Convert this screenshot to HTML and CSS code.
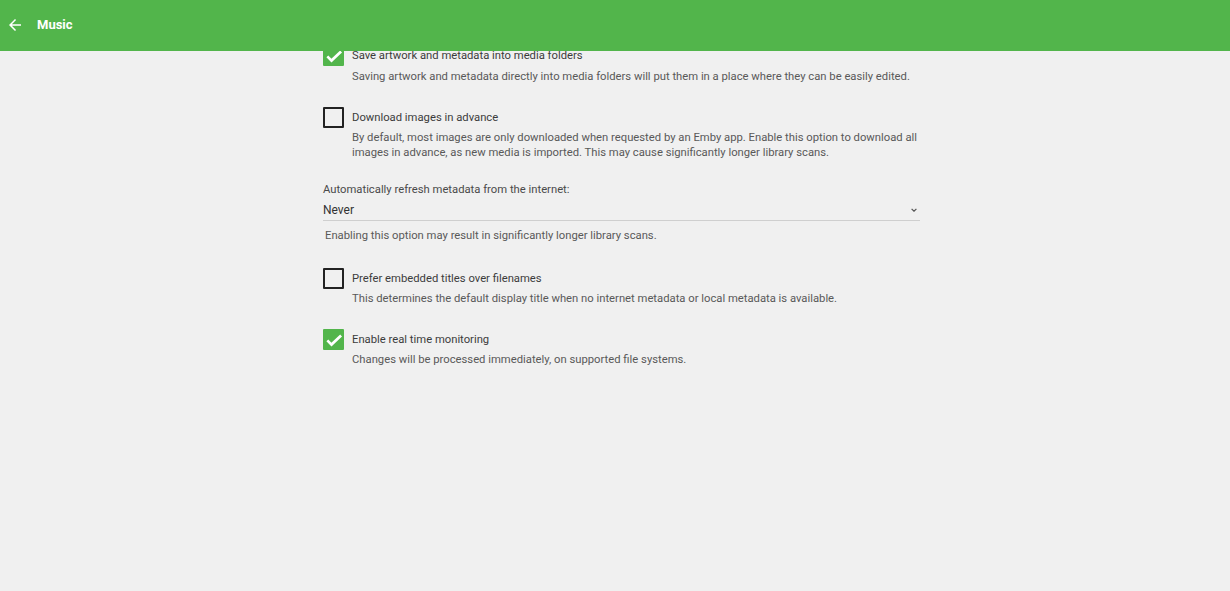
FILE: index.html
```html
<!DOCTYPE html>
<html lang="en">
<head>
  <meta charset="UTF-8">
  <meta name="viewport" content="width=device-width, initial-scale=1">
  <title>Music</title>
  <link rel="stylesheet" href="styles.css">
</head>
<body>

<div class="header">
  <svg class="back-icon" viewBox="0 0 24 24" width="18" height="18">
    <path d="M20 11H7.83l5.59-5.59L12 4l-8 8 8 8 1.41-1.41L7.83 13H20v-2z" fill="#fff"/>
  </svg>
  <span class="header-title">Music</span>
</div>

<div class="content">

  <div class="check-item">
    <div class="check-row">
      <span class="box checked">
        <svg viewBox="0 0 24 24" width="20" height="20"><path d="M4 12.5l5 5L20.5 6.5" fill="none" stroke="#fff" stroke-width="3.2"/></svg>
      </span>
      <span class="check-label">Save artwork and metadata into media folders</span>
    </div>
    <div class="field-desc">Saving artwork and metadata directly into media folders will put them in a place where they can be easily edited.</div>
  </div>

  <div class="check-item">
    <div class="check-row">
      <span class="box"></span>
      <span class="check-label">Download images in advance</span>
    </div>
    <div class="field-desc">By default, most images are only downloaded when requested by an Emby app. Enable this option to download all images in advance, as new media is imported. This may cause significantly longer library scans.</div>
  </div>

  <div class="select-item">
    <div class="select-label">Automatically refresh metadata from the internet:</div>
    <div class="select-row">
      <span>Never</span>
      <svg class="select-arrow" viewBox="0 0 10 6" width="6" height="4"><path d="M1 1l4 4 4-4" fill="none" stroke="#555" stroke-width="2"/></svg>
    </div>
    <div class="select-desc">Enabling this option may result in significantly longer library scans.</div>
  </div>

  <div class="check-item">
    <div class="check-row">
      <span class="box"></span>
      <span class="check-label">Prefer embedded titles over filenames</span>
    </div>
    <div class="field-desc">This determines the default display title when no internet metadata or local metadata is available.</div>
  </div>

  <div class="check-item">
    <div class="check-row">
      <span class="box checked">
        <svg viewBox="0 0 24 24" width="20" height="20"><path d="M4 12.5l5 5L20.5 6.5" fill="none" stroke="#fff" stroke-width="3.2"/></svg>
      </span>
      <span class="check-label">Enable real time monitoring</span>
    </div>
    <div class="field-desc">Changes will be processed immediately, on supported file systems.</div>
  </div>

</div>

</body>
</html>
```

FILE: styles.css
```css
body {
  margin: 0;
  padding: 0;
  background: #f0f0f0;
  font-family: Roboto, "Noto Sans", sans-serif;
  color: #333;
}

.header {
  position: fixed;
  top: 0;
  left: 0;
  right: 0;
  height: 49px;
  padding: 0 0 2px 6px;
  background: #52b54b;
  display: flex;
  align-items: center;
  z-index: 10;
}

.back-icon {
  display: block;
}

.header-title {
  color: #fff;
  font-size: 13px;
  font-weight: 700;
  margin-left: 13px;
}

.content {
  width: 597px;
  margin: 45px 0 0 323px;
}

.check-item {
  margin-bottom: 23px;
}

.check-row {
  display: flex;
  align-items: center;
  height: 21px;
}

.box {
  width: 17px;
  height: 17px;
  border: 2px solid #222;
  border-radius: 1px;
  display: flex;
  align-items: center;
  justify-content: center;
  flex-shrink: 0;
}

.box.checked {
  background: #52b54b;
  border-color: #52b54b;
}

.box svg {
  display: block;
  flex-shrink: 0;
}

.check-label {
  font-size: 11.25px;
  color: #3c3c3c;
  margin-left: 8px;
}

.field-desc {
  font-size: 11.25px;
  line-height: 15px;
  color: #595959;
  margin: 2px 0 0 29px;
}

.check-item:first-child .field-desc {
  margin-top: 3px;
}

.select-item {
  margin: 4px 0 25px;
}

.select-label {
  font-size: 11.25px;
  line-height: 14px;
  color: #4a4a4a;
}

.select-row {
  display: flex;
  align-items: center;
  justify-content: space-between;
  padding: 6px 0 3px;
  line-height: 14px;
  font-size: 12px;
  color: #333;
  border-bottom: 1px solid #cfcfcf;
}

.select-arrow {
  display: block;
  margin-right: 3px;
}

.select-desc {
  font-size: 11.25px;
  line-height: 15px;
  color: #595959;
  margin: 7px 0 0 2px;
}
```
